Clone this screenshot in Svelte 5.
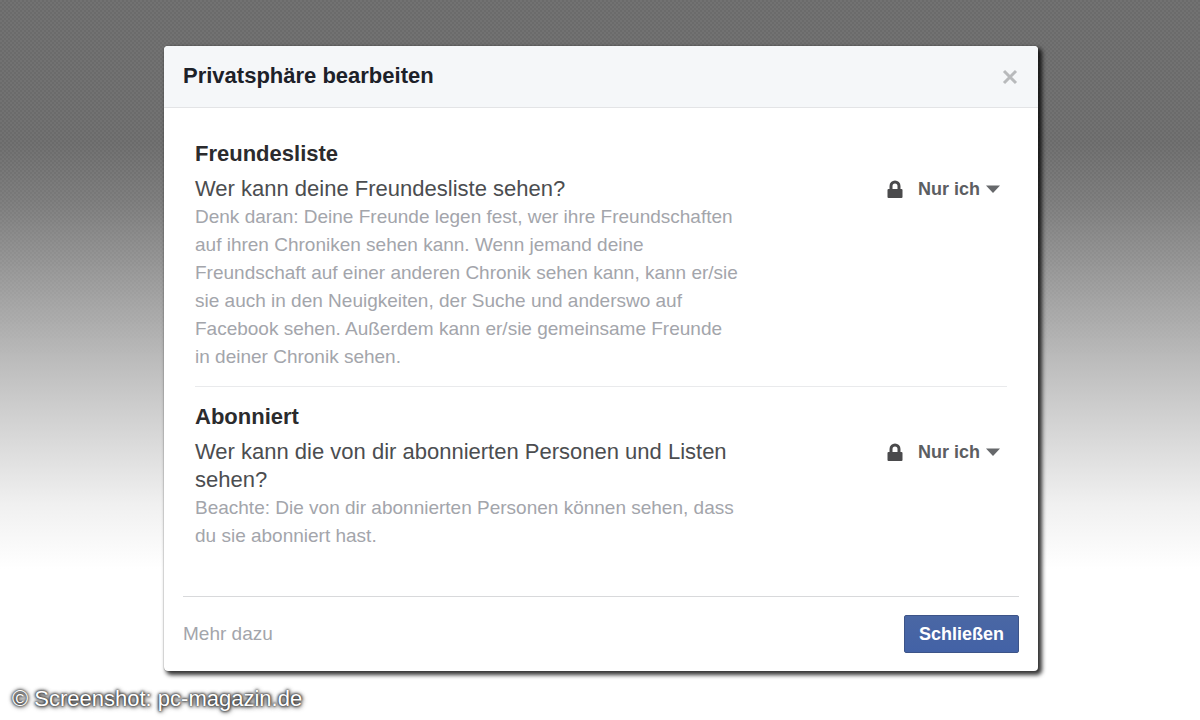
<script lang="ts">
	const audiences = ['Öffentlich', 'Freunde', 'Nur ich'];

	let open = $state(true);
	let sections = $state([
		{
			id: 'friends',
			title: 'Freundesliste',
			question: 'Wer kann deine Freundesliste sehen?',
			hint: 'Denk daran: Deine Freunde legen fest, wer ihre Freundschaften auf ihren Chroniken sehen kann. Wenn jemand deine Freundschaft auf einer anderen Chronik sehen kann, kann er/sie sie auch in den Neuigkeiten, der Suche und anderswo auf Facebook sehen. Außerdem kann er/sie gemeinsame Freunde in deiner Chronik sehen.',
			audience: 'Nur ich'
		},
		{
			id: 'following',
			title: 'Abonniert',
			question: 'Wer kann die von dir abonnierten Personen und Listen sehen?',
			hint: 'Beachte: Die von dir abonnierten Personen können sehen, dass du sie abonniert hast.',
			audience: 'Nur ich'
		}
	]);

	function close() {
		open = false;
	}
</script>

<div class="page">
	{#if open}
		<div class="dialog" role="dialog" aria-labelledby="dialog-title">
			<header>
				<h1 id="dialog-title">Privatsphäre bearbeiten</h1>
				<button class="dismiss" type="button" aria-label="Schließen" onclick={close}>
					<svg width="18" height="18" viewBox="0 0 18 18">
						<path d="M3 4 15 16M15 4 3 16" />
					</svg>
				</button>
			</header>

			<div class="sections">
				{#each sections as section (section.id)}
					<section>
						<h2>{section.title}</h2>
						<div class="row">
							<div class="text">
								<label class="question" for={section.id}>{section.question}</label>
								<p class="hint">{section.hint}</p>
							</div>
							<div class="audience">
								<svg class="lock" width="16" height="20" viewBox="0 0 16 20">
									<path class="shackle" d="M4 11V7a4 4 0 0 1 8 0V11" />
									<rect x="0.5" y="10" width="15" height="9" rx="1" />
								</svg>
								<select id={section.id} bind:value={section.audience}>
									{#each audiences as audience}
										<option>{audience}</option>
									{/each}
								</select>
								<svg class="caret" width="14" height="8" viewBox="0 0 14 8">
									<path d="M0 0.5H14L7 8Z" />
								</svg>
							</div>
						</div>
					</section>
				{/each}
			</div>

			<footer>
				<a href="#mehr">Mehr dazu</a>
				<button class="primary" type="button" onclick={close}>Schließen</button>
			</footer>
		</div>
	{/if}
	<p class="credit">© Screenshot: pc-magazin.de</p>
</div>

<style>
	:global(body) {
		margin: 0;
	}

	.page {
		box-sizing: border-box;
		display: flex;
		flex-direction: column;
		min-height: 100vh;
		padding: 46px 0 0 2px;
		font-family: 'Liberation Sans', Arial, sans-serif;
		background: linear-gradient(
			#727272 0,
			#727272 20%,
			#808080 28%,
			#a6a6a6 42%,
			#c9c9c9 55%,
			#dedede 63%,
			#f0f0f0 70%,
			#fff 79%
		);
		position: relative;
		isolation: isolate;
	}

	/* fine checker that fades out with the grey */
	.page::before {
		content: '';
		position: absolute;
		inset: 0;
		z-index: -1;
		background: repeating-conic-gradient(rgba(0, 0, 0, 0.06) 0 25%, transparent 0 50%) 0 0 / 4px 4px;
		mask-image: linear-gradient(#000 20%, transparent 50%);
	}

	h1,
	h2,
	p {
		margin: 0;
	}

	.dialog {
		box-sizing: border-box;
		width: calc(100% - 32px);
		max-width: 874px;
		margin: 0 auto;
		background: #fff;
		border-radius: 4px;
		box-shadow:
			0 0 1px #444,
			3px 3px 4px 1px rgba(0, 0, 0, 0.8);
	}

	header {
		display: flex;
		align-items: center;
		justify-content: space-between;
		padding: 16px 19px 17px;
		background: #f5f7f9;
		border-bottom: 1px solid #e3e4e6;
		border-radius: 4px 4px 0 0;
	}

	h1,
	h2 {
		font-size: 22px;
		line-height: 28px;
		color: #1d2129;
	}

	h2 {
		color: #2b2b2d;
	}

	button {
		font-family: inherit;
		cursor: pointer;
	}

	.dismiss {
		display: flex;
		padding: 0;
		background: none;
		border: 0;
	}

	.dismiss path {
		fill: none;
		stroke: #b8babc;
		stroke-width: 3;
	}

	.sections {
		padding: 16px 31px 31px;
	}

	section {
		padding: 16px 0 15px;
	}

	section + section {
		border-top: 1px solid #e9eaec;
	}

	.row {
		display: flex;
		align-items: flex-start;
		justify-content: space-between;
		gap: 24px;
		padding-top: 7px;
	}

	.text {
		flex: 0 1 545px;
	}

	.question {
		display: block;
		font-size: 22px;
		line-height: 28px;
		color: #4b4d50;
	}

	.hint {
		font-size: 19px;
		line-height: 28px;
		color: #a3a5ab;
	}

	.audience {
		display: flex;
		align-items: center;
		flex: none;
		padding-right: 7px;
		color: #5c5e62;
	}

	.lock {
		margin-right: 15px;
		fill: #4a4a4c;
	}

	.shackle {
		fill: none;
		stroke: #4a4a4c;
		stroke-width: 3;
	}

	select {
		margin: 0 -20px 0 0;
		padding: 0 26px 0 0;
		font: bold 18px/28px 'Liberation Sans', Arial, sans-serif;
		color: inherit;
		appearance: none;
		background: none;
		border: 0;
		cursor: pointer;
		field-sizing: content;
	}

	.caret {
		fill: #66686b;
		pointer-events: none;
	}

	footer {
		display: flex;
		align-items: center;
		justify-content: space-between;
		margin: 0 19px;
		padding: 18px 0;
		border-top: 1px solid #d8d9db;
	}

	footer a {
		font-size: 19px;
		line-height: 28px;
		color: #a3a5ab;
		text-decoration: none;
	}

	.primary {
		padding: 4px 14px;
		font-size: 18px;
		font-weight: bold;
		line-height: 28px;
		color: #fff;
		background: linear-gradient(#4a67a4, #4362a6);
		border: 1px solid #3d5488;
		border-radius: 2px;
	}

	.credit {
		padding: 14px 10px 6px;
		font-size: 22px;
		line-height: 28px;
		color: #fff;
		text-shadow:
			0 0 2px #333,
			0 0 3px #333,
			0 0 4px #444,
			1px 1px 5px #555;
	}
</style>
